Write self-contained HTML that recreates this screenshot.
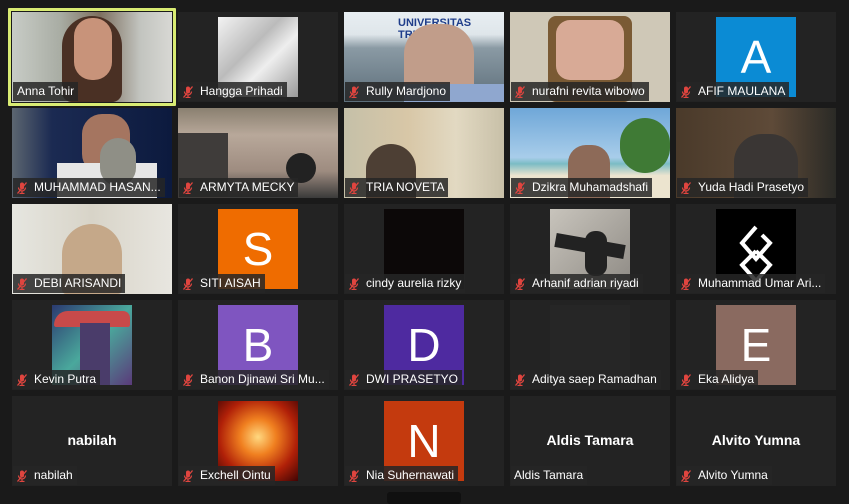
<!DOCTYPE html>
<html><head><style>
*{margin:0;padding:0;box-sizing:border-box}
body{width:849px;height:500px;background:#1a1a1a;position:relative;overflow:hidden;font-family:"Liberation Sans",sans-serif}
.t{position:absolute;width:160px;height:90px;background:#232323;overflow:hidden}
.av{position:absolute;left:40px;top:5px;width:80px;height:80px;color:#fff;font-size:46px;text-align:center;line-height:80px}
.lb{position:absolute;left:1px;bottom:1px;height:19px;background:rgba(38,38,38,.85);color:#fff;font-size:12px;line-height:19px;padding:0 4px 0 3px;white-space:nowrap;display:flex;align-items:center}
.lb svg{margin-right:6px}
.nm{position:absolute;left:0;right:0;top:36px;text-align:center;color:#fff;font-weight:bold;font-size:14px}
</style></head><body>
<svg width="0" height="0" style="position:absolute"><defs><symbol id="m" viewBox="0 0 12 12"><rect x="4" y="0.5" width="4" height="7" rx="2" fill="#e0453f"/><path d="M2.5 5.5a3.5 3.5 0 0 0 7 0M6 9v2.5M3.5 11.5h5" stroke="#e0453f" fill="none" stroke-width="1.2"/><path d="M10.5 0.5L1.5 11.5" stroke="#e0453f" stroke-width="1.3"/></symbol></defs></svg>

<!-- row 1 -->
<div class="t" style="left:12px;top:12px;background:linear-gradient(90deg,#c8ccc6,#a9ada4 30%,#7d7060 55%,#c2c4bf 80%,#d8d8d4)"><div style="position:absolute;left:50px;top:4px;width:60px;height:86px;border-radius:30px 30px 10px 10px;background:#4a3024"></div><div style="position:absolute;left:62px;top:6px;width:38px;height:62px;border-radius:18px;background:#c8937a"></div><div class="lb" style="padding-left:4px">Anna Tohir</div></div>
<div style="position:absolute;left:8px;top:8px;width:168px;height:98px;border:3px solid #d9ec73;border-radius:1px"></div>
<div class="t" style="left:178px;top:12px"><div class="av" style="background:linear-gradient(135deg,#f3f3f3,#bbb 40%,#eee 60%,#999);"></div><div class="lb"><svg width="12" height="12"><use href="#m"/></svg>Hangga Prihadi</div></div>
<div class="t" style="left:344px;top:12px;background:linear-gradient(180deg,#e8eef2 0,#dfe6ea 25%,#8a9aa4 40%,#5d6e7a 100%)"><div style="position:absolute;left:54px;top:5px;font-size:11px;font-weight:bold;color:#1e3d8a">UNIVERSITAS TRISAKTI</div><div style="position:absolute;left:60px;top:12px;width:70px;height:78px;border-radius:30px 30px 8px 8px;background:#c19d8a"></div><div style="position:absolute;left:60px;top:72px;width:100px;height:18px;background:#8fa7cf"></div><div class="lb"><svg width="12" height="12"><use href="#m"/></svg>Rully Mardjono</div></div>
<div class="t" style="left:510px;top:12px;background:#cfc8b7"><div style="position:absolute;left:38px;top:4px;width:84px;height:86px;border-radius:8px;background:#7a5a34"></div><div style="position:absolute;left:46px;top:8px;width:68px;height:60px;border-radius:14px;background:#d8aa96"></div><div class="lb"><svg width="12" height="12"><use href="#m"/></svg>nurafni revita wibowo</div></div>
<div class="t" style="left:676px;top:12px"><div class="av" style="background:#0b8bd4">A</div><div class="lb"><svg width="12" height="12"><use href="#m"/></svg>AFIF MAULANA</div></div>
<!-- row 2 -->
<div class="t" style="left:12px;top:108px;background:linear-gradient(90deg,#5c6670,#1b2a52 25%,#0c1a3e)"><div style="position:absolute;left:70px;top:6px;width:48px;height:60px;border-radius:20px;background:#a57560"></div><div style="position:absolute;left:45px;top:55px;width:100px;height:35px;background:#e6e6e6"></div><div style="position:absolute;left:88px;top:30px;width:36px;height:48px;border-radius:18px;background:#8f8f86"></div><div class="lb"><svg width="12" height="12"><use href="#m"/></svg>MUHAMMAD HASAN...</div></div>
<div class="t" style="left:178px;top:108px;background:linear-gradient(180deg,#8a8070,#b8a89a 30%,#9e8c80 70%,#3a3a3a)"><div style="position:absolute;left:0;top:25px;width:50px;height:65px;background:#3f3c3a"></div><div style="position:absolute;left:108px;top:45px;width:30px;height:30px;border-radius:15px;background:#222"></div><div class="lb"><svg width="12" height="12"><use href="#m"/></svg>ARMYTA MECKY</div></div>
<div class="t" style="left:344px;top:108px;background:linear-gradient(90deg,#c5c0a8,#d8c7a7 40%,#e2d9c2 70%,#c8c0a8)"><div style="position:absolute;left:22px;top:36px;width:50px;height:54px;border-radius:25px 25px 0 0;background:#4d3f34"></div><div class="lb"><svg width="12" height="12"><use href="#m"/></svg>TRIA NOVETA</div></div>
<div class="t" style="left:510px;top:108px;background:linear-gradient(180deg,#6fa7d8,#a8cdea 55%,#7bbcc4 62%,#ece4cf 75%)"><div style="position:absolute;left:110px;top:10px;width:50px;height:55px;border-radius:30px;background:#3f7a35"></div><div style="position:absolute;left:58px;top:37px;width:42px;height:53px;border-radius:18px 18px 0 0;background:#8d6a58"></div><div class="lb"><svg width="12" height="12"><use href="#m"/></svg>Dzikra Muhamadshafi</div></div>
<div class="t" style="left:676px;top:108px;background:linear-gradient(90deg,#4a3a2a,#5e4a38 60%,#2a2a26)"><div style="position:absolute;left:58px;top:26px;width:64px;height:64px;border-radius:28px 28px 0 0;background:#3a3634"></div><div class="lb"><svg width="12" height="12"><use href="#m"/></svg>Yuda Hadi Prasetyo</div></div>
<!-- row 3 -->
<div class="t" style="left:12px;top:204px;background:linear-gradient(90deg,#e6e6e0,#d8d4c8 50%,#e8e6e0)"><div style="position:absolute;left:50px;top:20px;width:60px;height:70px;border-radius:30px 30px 4px 4px;background:#c5a889"></div><div class="lb"><svg width="12" height="12"><use href="#m"/></svg>DEBI ARISANDI</div></div>
<div class="t" style="left:178px;top:204px"><div class="av" style="background:#ef6c00">S</div><div class="lb"><svg width="12" height="12"><use href="#m"/></svg>SITI AISAH</div></div>
<div class="t" style="left:344px;top:204px"><div class="av" style="background:#0c0808"></div><div class="lb"><svg width="12" height="12"><use href="#m"/></svg>cindy aurelia rizky</div></div>
<div class="t" style="left:510px;top:204px"><div class="av" style="background:linear-gradient(135deg,#c8c4bc,#8e8a84)"><div style="position:absolute;left:5px;top:30px;width:70px;height:14px;background:#222;transform:rotate(10deg)"></div><div style="position:absolute;left:35px;top:22px;width:22px;height:45px;border-radius:10px;background:#222"></div></div><div class="lb"><svg width="12" height="12"><use href="#m"/></svg>Arhanif adrian riyadi</div></div>
<div class="t" style="left:676px;top:204px"><div class="av" style="background:#000"><svg width="80" height="80" viewBox="0 0 80 80"><path d="M40 18L26 34 40 50 54 34 46 26M40 42L26 56 40 72 54 56 40 42" stroke="#fff" stroke-width="4" fill="none"/></svg></div><div class="lb"><svg width="12" height="12"><use href="#m"/></svg>Muhammad Umar Ari...</div></div>
<!-- row 4 -->
<div class="t" style="left:12px;top:300px"><div class="av" style="background:linear-gradient(135deg,#2b3a70,#4aa89c 50%,#5a3a7a)"><div style="position:absolute;left:2px;top:6px;width:76px;height:16px;border-radius:40px 20px 6px 6px;background:#c84a4a"></div><div style="position:absolute;left:28px;top:18px;width:30px;height:62px;background:#4a3c6a"></div></div><div class="lb"><svg width="12" height="12"><use href="#m"/></svg>Kevin Putra</div></div>
<div class="t" style="left:178px;top:300px"><div class="av" style="background:#7f55c0">B</div><div class="lb"><svg width="12" height="12"><use href="#m"/></svg>Banon Djinawi Sri Mu...</div></div>
<div class="t" style="left:344px;top:300px"><div class="av" style="background:#4e2aa0">D</div><div class="lb"><svg width="12" height="12"><use href="#m"/></svg>DWI PRASETYO</div></div>
<div class="t" style="left:510px;top:300px"><div class="av" style="background:#262626;top:5px"></div><div class="lb"><svg width="12" height="12"><use href="#m"/></svg>Aditya saep Ramadhan</div></div>
<div class="t" style="left:676px;top:300px"><div class="av" style="background:#8a6a60">E</div><div class="lb"><svg width="12" height="12"><use href="#m"/></svg>Eka Alidya</div></div>
<!-- row 5 -->
<div class="t" style="left:12px;top:396px"><div class="nm">nabilah</div><div class="lb"><svg width="12" height="12"><use href="#m"/></svg>nabilah</div></div>
<div class="t" style="left:178px;top:396px"><div class="av" style="background:radial-gradient(circle at 50% 45%,#ffd880,#f08020 30%,#b02008 65%,#400404)"></div><div class="lb"><svg width="12" height="12"><use href="#m"/></svg>Exchell Ointu</div></div>
<div class="t" style="left:344px;top:396px"><div class="av" style="background:#c43a0e">N</div><div class="lb"><svg width="12" height="12"><use href="#m"/></svg>Nia Suhernawati</div></div>
<div class="t" style="left:510px;top:396px"><div class="nm">Aldis Tamara</div><div class="lb">Aldis Tamara</div></div>
<div class="t" style="left:676px;top:396px"><div class="nm">Alvito Yumna</div><div class="lb"><svg width="12" height="12"><use href="#m"/></svg>Alvito Yumna</div></div>
<div style="position:absolute;left:387px;top:492px;width:74px;height:12px;border-radius:3px;background:#101010"></div>
</body></html>
